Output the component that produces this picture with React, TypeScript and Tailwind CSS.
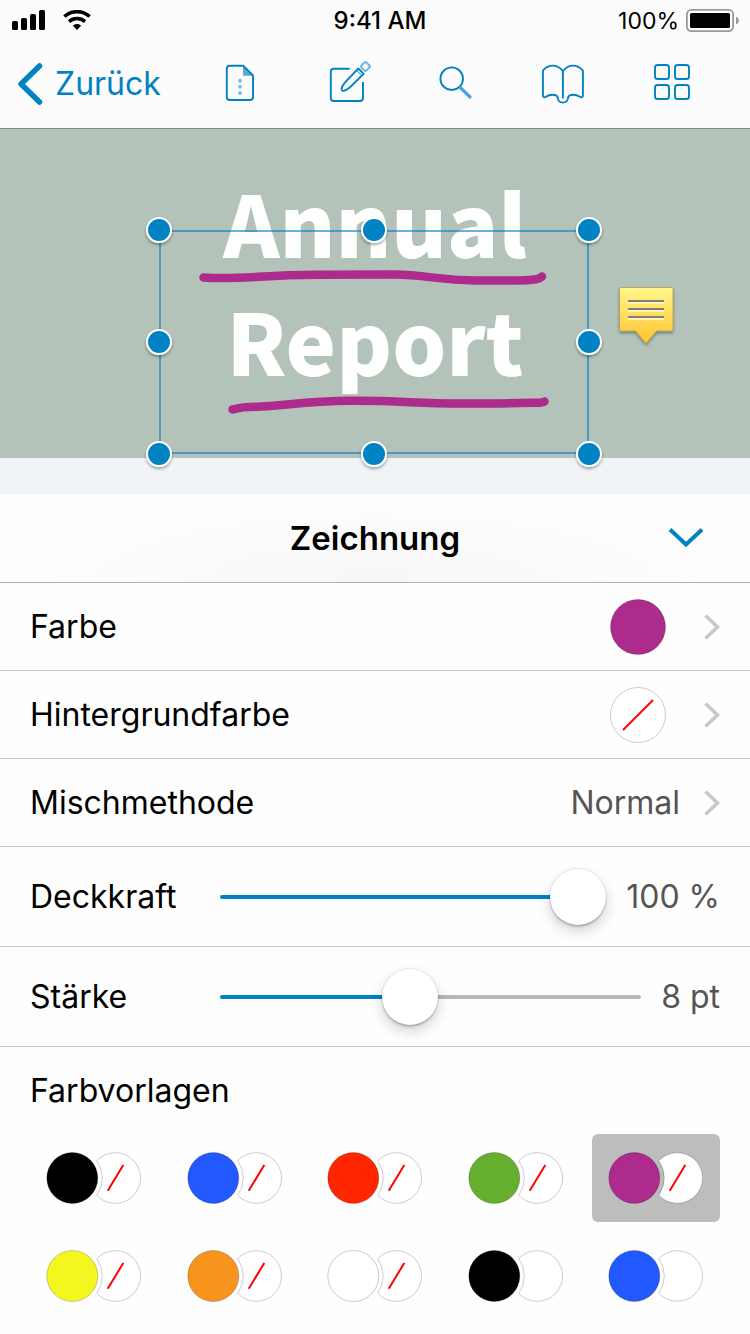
import { useState } from "react";
import type { ReactNode } from "react";

const MAGENTA = "#ad2b8c";

function Signal() {
  return (
    <svg className="h-[22px] w-[34px]" viewBox="0 0 34 22" aria-hidden="true">
      <rect x="0" y="11" width="6" height="9" rx="1.5" />
      <rect x="9" y="8" width="6" height="12" rx="1.5" />
      <rect x="18" y="4" width="6" height="16" rx="1.5" />
      <rect x="27" y="0" width="6" height="20" rx="1.5" />
    </svg>
  );
}

function Wifi() {
  return (
    <svg className="h-[22px] w-[28px]" viewBox="0 1 28 22" aria-hidden="true">
      <g fill="none" stroke="#000" strokeWidth="3.5">
        <path d="M1.4 7.6C8.4 1 19.6 1 26.6 7.6" />
        <path d="M6 12.6C10.5 8.6 17.5 8.6 22 12.6" />
      </g>
      <path d="M14 21 9.8 16.6C12 14.4 16 14.4 18.2 16.6Z" />
    </svg>
  );
}

function Battery() {
  return (
    <svg className="h-[24px] w-[54px]" viewBox="0 0 54 24" aria-hidden="true">
      <rect x="0.9" y="0.9" width="46.2" height="21.2" rx="4.5" fill="none" stroke="#999" strokeWidth="1.8" />
      <rect x="4" y="4" width="40" height="15" rx="1.5" />
      <path d="M50 7.500Q53 9 53 11.500T50 15.500Z" fill="#999" />
    </svg>
  );
}

function ToolIcon({ children }: { children: ReactNode }) {
  return (
    <svg
      className="size-12"
      viewBox="0 0 48 48"
      fill="none"
      stroke="#0082c3"
      strokeWidth="1.9"
      strokeLinejoin="round"
      aria-hidden="true"
    >
      {children}
    </svg>
  );
}

const tools: { label: string; icon: ReactNode }[] = [
  {
    label: "Dokument",
    icon: (
      <ToolIcon>
        <path d="M27 6 37 15.7H27Z" fill="#59aad5" stroke="none" />
        <path d="M13.8 5.8H27.5L37 15.500V37Q37 40 34 40H13.8Q10.8 40 10.8 37V8.8Q10.8 5.8 13.8 5.8Z" />
        <g fill="#80c0e0" stroke="none">
          <circle cx="24" cy="20.8" r="2" />
          <circle cx="24" cy="26.8" r="2" />
          <circle cx="24" cy="33" r="2" />
        </g>
      </ToolIcon>
    ),
  },
  {
    label: "Bearbeiten",
    icon: (
      <ToolIcon>
        <path d="M25.700 8.800H9.800Q6.800 8.800 6.800 11.800V38Q6.800 41 9.800 41H36Q39 41 39 38V22" />
        <path d="M34.300 8.500 39.700 13.900 27 26.300C23 30 19.300 31.600 18 30.300C16.800 29 18.600 25 22 21.300Z" />
        <path d="M32.600 10.400 37.800 15.600" strokeWidth="1" />
        <path d="M40.300 2.600Q41.400 1.500 42.500 2.600L45.300 5.400Q46.400 6.500 45.300 7.600L42.500 10.400Q41.400 11.500 40.300 10.400L37.500 7.600Q36.400 6.500 37.500 5.400Z" stroke="#66b3d9" strokeWidth="2" />
      </ToolIcon>
    ),
  },
  {
    label: "Suchen",
    icon: (
      <ToolIcon>
        <circle cx="19.7" cy="18.7" r="11.3" />
        <path d="M28.600 27.800 38 37" stroke="#4aa3d3" strokeWidth="3.2" strokeLinecap="round" />
      </ToolIcon>
    ),
  },
  {
    label: "Lesezeichen",
    icon: (
      <ToolIcon>
        <path d="M22.900 38.500V11C20 7.500 16.700 5.600 12.900 5.600S5.500 7.500 2.900 10.600V35.400C2.900 37.400 4.600 37.800 6 36.800C8 35.400 10 34.800 12.700 34.800C16 34.800 17.500 36 17.800 38C18.100 40.800 20 42.600 22.900 42.600S27.700 40.800 28 38C28.300 36 29.800 34.800 33.100 34.800C35.800 34.800 37.800 35.400 39.800 36.800C41.200 37.800 42.900 37.400 42.900 35.400V10.600C40.300 7.500 36.700 5.600 32.900 5.600S25.800 7.500 22.900 11" />
      </ToolIcon>
    ),
  },
  {
    label: "Übersicht",
    icon: (
      <ToolIcon>
        <rect x="7" y="5" width="14" height="14" rx="2.6" />
        <rect x="27" y="5" width="14" height="14" rx="2.6" />
        <rect x="7" y="25" width="14" height="14" rx="2.6" />
        <rect x="27" y="25" width="14" height="14" rx="2.6" />
      </ToolIcon>
    ),
  },
];

const handles: [number, number][] = [
  [159, 230], [374, 230], [589, 230],
  [159, 342], [589, 342],
  [159, 454], [374, 454], [589, 454],
];

function Markup() {
  return (
    <svg
      className="absolute top-0 left-1/2 h-[365px] w-[750px] max-w-none -translate-x-1/2"
      viewBox="0 129 750 365"
      fill="none"
      aria-hidden="true"
    >
      <defs>
        <linearGradient id="note" x1="0" y1="0" x2="0" y2="1">
          <stop offset="0" stopColor="#fff68a" />
          <stop offset="1" stopColor="#ffc32e" />
        </linearGradient>
        <filter id="soft" x="-50%" y="-50%" width="200%" height="200%">
          <feDropShadow dx="0" dy="2" stdDeviation="1.5" floodOpacity="0.35" />
        </filter>
      </defs>
      <g stroke={MAGENTA} strokeWidth="8.5" strokeLinecap="round" strokeLinejoin="round">
        <path d="M203.500 277.500C238 280 262 275 315 274.700L395 274.600C425 275 440 280 475 280.500H515C532 280.500 539 279.500 542 276.500" />
        <path d="M232.500 409.500C238 408.500 240 407 250 407C285 406.500 300 401 350 400.800C400 400.500 415 403.500 460 403.500C490 403.800 510 403.300 540 402.700Q543 402.500 544.500 401.500" />
      </g>
      <rect x="160" y="231" width="428" height="222" stroke="#0082c3" strokeOpacity="0.6" strokeWidth="2" />
      {handles.map(([x, y]) => (
        <circle key={`${x}-${y}`} cx={x} cy={y} r="12" fill="#0082c3" stroke="#fff" strokeWidth="2" filter="url(#soft)" />
      ))}
      <path
        d="M621 287.500H671.500Q673 287.500 673 289V329.500Q673 331 671.500 331H656.500L646 343.500L635.500 331H621Q619.500 331 619.500 329.500V289Q619.500 287.500 621 287.500Z"
        fill="url(#note)"
        stroke="#b09a50"
        strokeWidth="0.8"
        filter="url(#soft)"
      />
      <path d="M628 303H664M628 311H664M628 319H664" stroke="#fff3a8" strokeWidth="2" />
      <path d="M628 301H664M628 309H664M628 317H664" stroke="#808080" strokeWidth="2" />
    </svg>
  );
}

function Disclosure() {
  return (
    <svg className="h-7 w-4" viewBox="0 0 16 28" fill="none" stroke="#c7c7cc" strokeWidth="3.5" aria-hidden="true">
      <path d="M1.500 2.500 13.500 14 1.500 25.500" />
    </svg>
  );
}

function Swatch({ color }: { color?: string }) {
  return (
    <svg className="mr-[38px] size-14" viewBox="0 0 56 56" aria-hidden="true">
      <circle cx="28" cy="28" r="27.5" fill={color ?? "#fff"} stroke="#000" strokeOpacity="0.2" />
      {!color && <path d="M13 43 43 13" stroke="#f00" strokeWidth="2" />}
    </svg>
  );
}

function Row({ label, children }: { label: string; children: ReactNode }) {
  return (
    <button type="button" className="flex h-[88px] w-full items-center border-b border-[#c8c7cc] px-[30px] text-left">
      <span className="flex-1">{label}</span>
      {children}
      <Disclosure />
    </button>
  );
}

function SliderRow({ id, label, initial, max, unit }: { id: string; label: string; initial: number; max: number; unit: string }) {
  const [value, setValue] = useState(initial);
  const percent = (value / max) * 100;
  return (
    <div className="flex h-[100px] items-center border-b border-[#c8c7cc] px-[30px]">
      <label htmlFor={id} className="w-[190px] shrink-0">
        {label}
      </label>
      <input
        id={id}
        type="range"
        min={0}
        max={max}
        value={value}
        onChange={(event) => setValue(Number(event.target.value))}
        style={{ backgroundImage: `linear-gradient(to right, #0082c3 ${percent}%, #b7b7b7 ${percent}%)` }}
        className="h-1 min-w-0 flex-1 appearance-none rounded-full [&::-webkit-slider-thumb]:size-14 [&::-webkit-slider-thumb]:appearance-none [&::-webkit-slider-thumb]:rounded-full [&::-webkit-slider-thumb]:bg-white [&::-webkit-slider-thumb]:shadow-[0_0_0_1px_rgba(0,0,0,0.06),0_2px_2px_rgba(0,0,0,0.18),0_6px_14px_rgba(0,0,0,0.18)]"
      />
      <output htmlFor={id} className="ml-5 whitespace-nowrap text-[#555]">
        {value} {unit}
      </output>
    </div>
  );
}

const presets: { name: string; color: string; empty: boolean }[] = [
  { name: "Schwarz", color: "#000000", empty: true },
  { name: "Blau", color: "#2158ff", empty: true },
  { name: "Rot", color: "#ff2600", empty: true },
  { name: "Grün", color: "#66ae2d", empty: true },
  { name: "Magenta", color: MAGENTA, empty: true },
  { name: "Gelb", color: "#f3f71f", empty: true },
  { name: "Orange", color: "#f7941e", empty: true },
  { name: "Weiß", color: "#ffffff", empty: true },
  { name: "Schwarz auf Weiß", color: "#000000", empty: false },
  { name: "Blau auf Weiß", color: "#2158ff", empty: false },
];

function PresetPair({ color, empty }: { color: string; empty: boolean }) {
  return (
    <svg className="h-[52px] w-24" viewBox="0 0 96 52" stroke="#000" strokeOpacity="0.2" aria-hidden="true">
      <circle cx="26.3" cy="26" r="25.5" fill={color} />
      <path d="M50.800 8.700A25.300 25.300 0 1 1 50.800 43.300A30 30 0 0 0 50.800 8.700Z" fill="#fff" />
      {empty && <path d="M61.700 38.700 77.300 13" stroke="#f00" strokeOpacity="1" strokeWidth="2" />}
    </svg>
  );
}

export default function App() {
  const [selected, setSelected] = useState(4);
  return (
    <div className="min-h-screen bg-[#fefefe] font-[Inter,'Noto_Sans',sans-serif] text-[32px] leading-10 text-black">
      <header className="border-b border-[#7f8f86] bg-[#fcfcfc]">
        <div className="grid h-10 grid-cols-[1fr_auto_1fr] items-center pt-0.5 pr-[10px] pl-3 text-[23px] leading-6">
          <div className="flex items-center gap-[17px]">
            <Signal />
            <Wifi />
          </div>
          <div className="ml-2 text-center text-2xl/6 font-medium">9:41 AM</div>
          <div className="flex items-center justify-end gap-[7px]">
            <span>100%</span>
            <Battery />
          </div>
        </div>
        <div className="flex h-[88px] items-center pr-6 pl-[18px]">
          <a href="#dokumente" className="flex w-[168px] shrink-0 items-center gap-3 text-[#0082c3]">
            <svg className="h-[42px] w-[25px]" viewBox="0 0 25 42" fill="none" stroke="currentColor" strokeWidth="5.5" strokeLinecap="round" strokeLinejoin="round" aria-hidden="true">
              <path d="M21.500 3 3 21 21.500 39" />
            </svg>
            Zurück
          </a>
          <nav className="grid flex-1 grid-cols-5 justify-items-center">
            {tools.map((tool) => (
              <button key={tool.label} type="button" aria-label={tool.label}>
                {tool.icon}
              </button>
            ))}
          </nav>
        </div>
      </header>

      <main>
        <section className="relative overflow-hidden bg-[#f0f4f6] pb-9">
          <h1 className="h-[329px] bg-[#b4c3ba] pt-[33px] text-center font-['Noto_Sans_CJK_SC','Noto_Sans',sans-serif] text-[85px] leading-[118px] font-black text-white">
            Annual
            <br />
            Report
          </h1>
          <Markup />
        </section>

        <section>
          <div className="grid h-[89px] grid-cols-[1fr_auto_1fr] items-center border-b border-[#b0b0b0] bg-[radial-gradient(ellipse_at_bottom,#f7f7f7_0%,#fdfdfd_60%)] px-[30px]">
            <h2 className="col-start-2 text-[33px] font-semibold">Zeichnung</h2>
            <button type="button" aria-label="Schließen" className="mr-4 justify-self-end">
              <svg className="h-5 w-9" viewBox="0 0 36 20" fill="none" stroke="#0082c3" strokeWidth="4" aria-hidden="true">
                <path d="M2 1.500 18 16.500 34 1.500" />
              </svg>
            </button>
          </div>
          <Row label="Farbe">
            <Swatch color={MAGENTA} />
          </Row>
          <Row label="Hintergrundfarbe">
            <Swatch />
          </Row>
          <Row label="Mischmethode">
            <span className="mr-6 text-[#555]">Normal</span>
          </Row>
          <SliderRow id="deckkraft" label="Deckkraft" initial={100} max={100} unit="%" />
          <SliderRow id="staerke" label="Stärke" initial={8} max={18} unit="pt" />

          <div className="px-[30px] pt-6 pb-3">
            <h3>Farbvorlagen</h3>
            <div className="mt-[23px] grid grid-cols-[repeat(5,128px)] justify-between gap-y-[10px]">
              {presets.map((preset, index) => (
                <button
                  key={preset.name}
                  type="button"
                  aria-label={preset.name}
                  aria-pressed={index === selected}
                  onClick={() => setSelected(index)}
                  className="flex h-[88px] items-center justify-center rounded-md aria-pressed:bg-[#bdbdbd]"
                >
                  <PresetPair color={preset.color} empty={preset.empty} />
                </button>
              ))}
            </div>
          </div>
        </section>
      </main>
    </div>
  );
}
